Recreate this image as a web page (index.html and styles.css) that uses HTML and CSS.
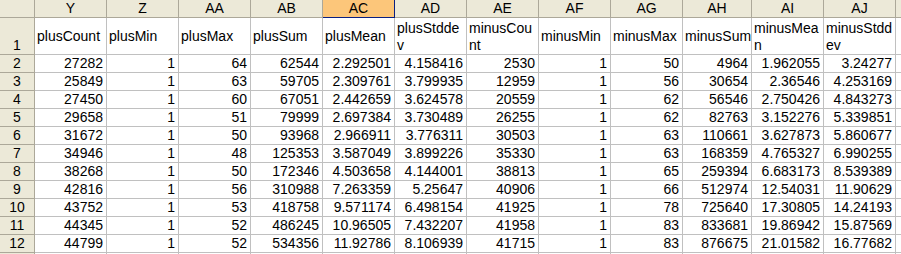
FILE: index.html
```html
<!DOCTYPE html>
<html>
<head>
<meta charset="utf-8">
<link rel="stylesheet" href="styles.css">
</head>
<body>
<div class="sheet">
  <div class="row hdr">
    <div class="h corner"></div>
    <div class="h">Y</div><div class="h">Z</div><div class="h">AA</div><div class="h">AB</div>
    <div class="h sel">AC</div><div class="h">AD</div><div class="h">AE</div><div class="h">AF</div>
    <div class="h">AG</div><div class="h">AH</div><div class="h">AI</div><div class="h">AJ</div><div class="h"></div>
  </div>
  <div class="row r1">
    <div class="rh">1</div>
    <div class="c t">plusCount</div>
    <div class="c t">plusMin</div>
    <div class="c t">plusMax</div>
    <div class="c t">plusSum</div>
    <div class="c t">plusMean</div>
    <div class="c t">plusStdde<br>v</div>
    <div class="c t">minusCou<br>nt</div>
    <div class="c t">minusMin</div>
    <div class="c t">minusMax</div>
    <div class="c t">minusSum</div>
    <div class="c t">minusMea<br>n</div>
    <div class="c t">minusStdd<br>ev</div>
    <div class="c t"></div>
  </div>
  <div class="row"><div class="rh">2</div><div class="c">27282</div><div class="c">1</div><div class="c">64</div><div class="c">62544</div><div class="c">2.292501</div><div class="c">4.158416</div><div class="c">2530</div><div class="c">1</div><div class="c">50</div><div class="c">4964</div><div class="c">1.962055</div><div class="c">3.24277</div><div class="c"></div></div>
  <div class="row"><div class="rh">3</div><div class="c">25849</div><div class="c">1</div><div class="c">63</div><div class="c">59705</div><div class="c">2.309761</div><div class="c">3.799935</div><div class="c">12959</div><div class="c">1</div><div class="c">56</div><div class="c">30654</div><div class="c">2.36546</div><div class="c">4.253169</div><div class="c"></div></div>
  <div class="row"><div class="rh">4</div><div class="c">27450</div><div class="c">1</div><div class="c">60</div><div class="c">67051</div><div class="c">2.442659</div><div class="c">3.624578</div><div class="c">20559</div><div class="c">1</div><div class="c">62</div><div class="c">56546</div><div class="c">2.750426</div><div class="c">4.843273</div><div class="c"></div></div>
  <div class="row"><div class="rh">5</div><div class="c">29658</div><div class="c">1</div><div class="c">51</div><div class="c">79999</div><div class="c">2.697384</div><div class="c">3.730489</div><div class="c">26255</div><div class="c">1</div><div class="c">62</div><div class="c">82763</div><div class="c">3.152276</div><div class="c">5.339851</div><div class="c"></div></div>
  <div class="row"><div class="rh">6</div><div class="c">31672</div><div class="c">1</div><div class="c">50</div><div class="c">93968</div><div class="c">2.966911</div><div class="c">3.776311</div><div class="c">30503</div><div class="c">1</div><div class="c">63</div><div class="c">110661</div><div class="c">3.627873</div><div class="c">5.860677</div><div class="c"></div></div>
  <div class="row"><div class="rh">7</div><div class="c">34946</div><div class="c">1</div><div class="c">48</div><div class="c">125353</div><div class="c">3.587049</div><div class="c">3.899226</div><div class="c">35330</div><div class="c">1</div><div class="c">63</div><div class="c">168359</div><div class="c">4.765327</div><div class="c">6.990255</div><div class="c"></div></div>
  <div class="row"><div class="rh">8</div><div class="c">38268</div><div class="c">1</div><div class="c">50</div><div class="c">172346</div><div class="c">4.503658</div><div class="c">4.144001</div><div class="c">38813</div><div class="c">1</div><div class="c">65</div><div class="c">259394</div><div class="c">6.683173</div><div class="c">8.539389</div><div class="c"></div></div>
  <div class="row"><div class="rh">9</div><div class="c">42816</div><div class="c">1</div><div class="c">56</div><div class="c">310988</div><div class="c">7.263359</div><div class="c">5.25647</div><div class="c">40906</div><div class="c">1</div><div class="c">66</div><div class="c">512974</div><div class="c">12.54031</div><div class="c">11.90629</div><div class="c"></div></div>
  <div class="row"><div class="rh">10</div><div class="c">43752</div><div class="c">1</div><div class="c">53</div><div class="c">418758</div><div class="c">9.571174</div><div class="c">6.498154</div><div class="c">41925</div><div class="c">1</div><div class="c">78</div><div class="c">725640</div><div class="c">17.30805</div><div class="c">14.24193</div><div class="c"></div></div>
  <div class="row"><div class="rh">11</div><div class="c">44345</div><div class="c">1</div><div class="c">52</div><div class="c">486245</div><div class="c">10.96505</div><div class="c">7.432207</div><div class="c">41958</div><div class="c">1</div><div class="c">83</div><div class="c">833681</div><div class="c">19.86942</div><div class="c">15.87569</div><div class="c"></div></div>
  <div class="row"><div class="rh">12</div><div class="c">44799</div><div class="c">1</div><div class="c">52</div><div class="c">534356</div><div class="c">11.92786</div><div class="c">8.106939</div><div class="c">41715</div><div class="c">1</div><div class="c">83</div><div class="c">876675</div><div class="c">21.01582</div><div class="c">16.77682</div><div class="c"></div></div>
  <div class="row"><div class="rh"></div><div class="c"></div><div class="c"></div><div class="c"></div><div class="c"></div><div class="c"></div><div class="c"></div><div class="c"></div><div class="c"></div><div class="c"></div><div class="c"></div><div class="c"></div><div class="c"></div><div class="c"></div></div>
</div>
</body>
</html>
```
FILE: styles.css
```css
html, body {
  margin: 0;
  padding: 0;
  background: #ffffff;
  overflow: hidden;
}
.sheet {
  width: 901px;
  height: 254px;
  overflow: hidden;
  font-family: "Liberation Sans", Arial, sans-serif;
  font-size: 14px;
  color: #000;
}
.row {
  display: grid;
  grid-template-columns: 35px repeat(9, 72px) 69px 72px 72px 40px;
  height: 18px;
}
.row.hdr { height: 18px; }
.row.r1 { height: 37px; }
.row > div {
  box-sizing: border-box;
  overflow: hidden;
  white-space: nowrap;
  line-height: 17px;
}
.h {
  background: #ece9d8;
  border-right: 1px solid #aca899;
  border-bottom: 1px solid #aca899;
  text-align: center;
  line-height: 17px;
}
.h.sel {
  background: #fcc67a;
  border-right-color: #0a1f80;
  border-bottom-color: #0a1f80;
}
.rh {
  background: #ece9d8;
  border-right: 1px solid #aca899;
  border-bottom: 1px solid #aca899;
  display: flex;
  align-items: flex-end;
  justify-content: center;
}
.c {
  border-right: 1px solid #c0c0c0;
  border-bottom: 1px solid #c0c0c0;
  display: flex;
  align-items: flex-end;
  justify-content: flex-end;
  padding: 0 3px 0 2px;
  text-align: right;
}
.c.t {
  display: flex;
  align-items: center;
  justify-content: flex-start;
  text-align: left;
  padding: 1px 1px 0 2px;
}
```
